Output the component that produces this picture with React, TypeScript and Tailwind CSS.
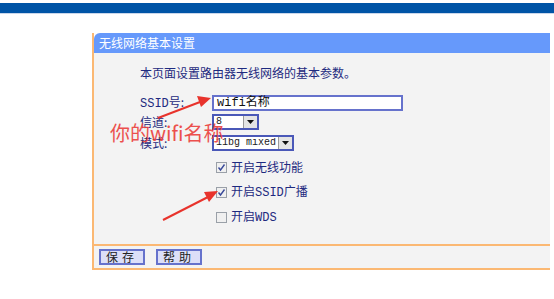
import React from "react";

const cjk = { fontFamily: '"Noto Sans CJK SC", "Liberation Sans", sans-serif' };
const mono = { fontFamily: '"Liberation Mono", "Noto Sans CJK SC", monospace' };

function Checkbox({ checked, label }: { checked: boolean; label: React.ReactNode }) {
  return (
    <div className="flex items-center gap-[4px] h-[12px]">
      <span className="w-[11px] h-[11px] border border-[#9aa0a8] bg-[#f0f0f0] flex items-center justify-center">
        {checked && (
          <svg width="9" height="9" viewBox="0 0 9 9">
            <path d="M1.5 4.5 L3.5 7 L7.5 1.5" stroke="#3a4a9a" strokeWidth="1.4" fill="none" />
          </svg>
        )}
      </span>
      <span className="text-[12px] leading-none text-[#1e2a80] whitespace-nowrap">{label}</span>
    </div>
  );
}

function Select({ value, width }: { value: string; width: string }) {
  return (
    <div className={`${width} h-[16px] border-2 border-[#4a58b8] bg-white flex items-center`}>
      <span className="flex-1 pl-[2px] text-[10px] leading-none text-[#222] whitespace-nowrap overflow-hidden" style={mono}>
        {value}
      </span>
      <span className="w-[14px] h-full bg-[#e4e4e4] border-l border-[#9a9a9a] flex items-center justify-center shrink-0">
        <svg width="7" height="4" viewBox="0 0 7 4">
          <path d="M0 0 L7 0 L3.5 4 Z" fill="#111" />
        </svg>
      </span>
    </div>
  );
}

export default function App() {
  return (
    <div className="relative w-[554px] h-[299px] bg-white overflow-hidden" style={cjk}>
      {/* top bar */}
      <div className="mt-[3px] h-[11px] bg-[#0054a6] border-b border-[#c9d6ea]" />

      {/* panel */}
      <div className="ml-[92px] mr-[4px] mt-[19px] border-l-2 border-[#fbb873]">
        <div className="h-[20px] bg-[#6699fb] rounded-tl-[6px] flex items-center pl-[5px] text-[12px] text-white">
          无线网络基本设置
        </div>
        <div className="h-[191px] bg-[#f3f3f3] pl-[46px] pt-[12px] text-[#1e2a80]">
          <div className="text-[12px] leading-[16px]">本页面设置路由器无线网络的基本参数。</div>

          <div className="mt-[14px] flex flex-col gap-[3px]">
            <div className="flex items-center">
              <span className="w-[72px] text-[12px] leading-none">
                <span style={mono}>SSID</span>号:
              </span>
              <div className="w-[191px] h-[16px] border-2 border-[#6672cc] bg-white flex items-center pl-[3px] text-[12px] leading-none text-[#111]" style={mono}>
                wifi名称
              </div>
            </div>
            <div className="flex items-center">
              <span className="w-[72px] text-[12px] leading-none">信道:</span>
              <Select value="8" width="w-[47px]" />
            </div>
            <div className="flex items-center mt-[2px]">
              <span className="w-[72px] text-[12px] leading-none">模式:</span>
              <Select value="11bg mixed" width="w-[82px]" />
            </div>
          </div>

          <div className="ml-[76px] mt-[10px] flex flex-col gap-[13px]">
            <Checkbox checked label="开启无线功能" />
            <Checkbox checked label={<>开启<span style={mono}>SSID</span>广播</>} />
            <Checkbox checked={false} label={<>开启<span style={mono}>WDS</span></>} />
          </div>
        </div>
        <div className="h-[26px] bg-[#f3f3f3] border-t-2 border-b-2 border-[#fbb873] flex items-center gap-[11px] pl-[5px]">
          <button className="w-[46px] h-[16px] bg-[#dcdff8] border-2 border-[#6672cc] text-[12px] leading-none text-[#222] tracking-[4px]">
            保存
          </button>
          <button className="w-[46px] h-[16px] bg-[#dcdff8] border-2 border-[#6672cc] text-[12px] leading-none text-[#222] tracking-[4px]">
            帮助
          </button>
        </div>
      </div>

      {/* annotation overlays */}
      <div className="absolute left-[110px] top-[120px] text-[20px] leading-[26px] text-[#ec3f3c] opacity-90" style={cjk}>
        你的wifi名称
      </div>
      <svg className="absolute left-0 top-0" width="554" height="299" viewBox="0 0 554 299">
        <line x1="158" y1="118" x2="200" y2="102" stroke="#e8332c" strokeWidth="2" />
        <path d="M211 98 L197 96 L201 107 Z" fill="#e8332c" />
        <line x1="163" y1="220" x2="208" y2="197" stroke="#e8332c" strokeWidth="2" />
        <path d="M218 191 L204 192 L209 202 Z" fill="#e8332c" />
      </svg>
    </div>
  );
}
